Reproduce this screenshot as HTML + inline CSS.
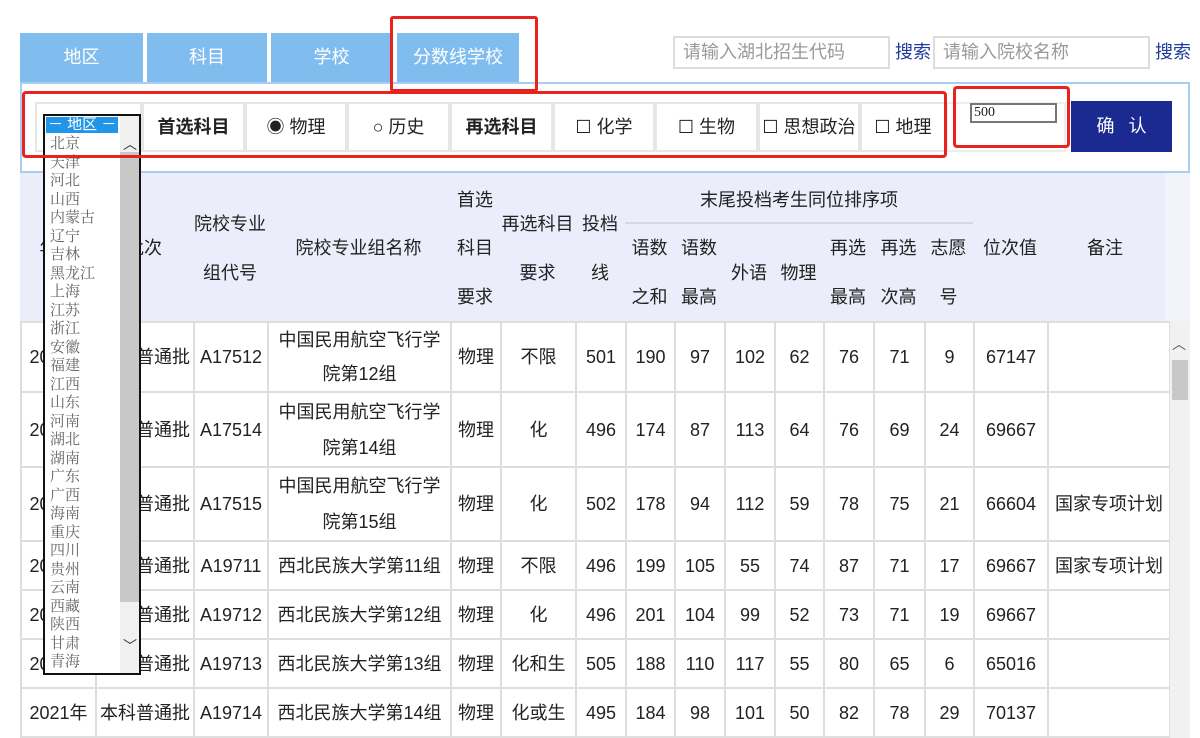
<!DOCTYPE html>
<html><head><meta charset="utf-8"><style>
*{margin:0;padding:0;box-sizing:border-box}
body{width:1200px;height:738px;background:#fff;position:relative;overflow:hidden;font-family:"Liberation Sans","Noto Sans CJK SC",sans-serif;color:#222}
.a{position:absolute}
.tab{position:absolute;top:33px;height:49px;background:#80bdee;color:#fff;font-size:18px;text-align:center;line-height:49px}
.cell{position:absolute;top:102px;height:50px;border:2px solid #e6e6e6;font-size:18px;line-height:46px;text-align:center;background:#fff}
.h{position:absolute;font-size:18px;line-height:20px;text-align:center;color:#222}
table{position:absolute;left:20px;top:321px;border-collapse:collapse;table-layout:fixed;width:1149px}
td{border:2px solid #dedede;font-size:18px;text-align:center;line-height:36px;padding:0;white-space:nowrap;overflow:hidden}
.lst{position:absolute;left:43px;top:114px;width:98px;height:561px;border:2px solid #111;background:#fff;overflow:hidden}
.lst .it{font-family:"Noto Serif CJK SC","Liberation Serif",serif;font-size:15px;line-height:18.5px;height:18.5px;color:#666;padding-left:5px;overflow:hidden}
</style></head><body>
<div class="tab" style="left:20px;width:123px">地区</div>
<div class="tab" style="left:147px;width:120px">科目</div>
<div class="tab" style="left:271px;width:121px">学校</div>
<div class="tab" style="left:397px;width:122px">分数线学校</div>
<div class="a" style="left:673px;top:36px;width:217px;height:33px;border:2px solid #ddd;color:#999;font-size:18px;line-height:29px;padding-left:8px">请输入湖北招生代码</div>
<div class="a" style="left:895px;top:38px;color:#1e3a9a;font-size:18px">搜索</div>
<div class="a" style="left:933px;top:36px;width:217px;height:33px;border:2px solid #ddd;color:#999;font-size:18px;line-height:29px;padding-left:8px">请输入院校名称</div>
<div class="a" style="left:1155px;top:38px;color:#1e3a9a;font-size:18px">搜索</div>
<div class="a" style="left:20px;top:82px;width:1170px;height:91px;border:2px solid #a8cdee"></div>
<div class="cell" style="left:35px;width:107px"></div>
<div class="cell" style="left:142px;width:103px;font-weight:bold">首选科目</div>
<div class="cell" style="left:245px;width:102px">◉ 物理</div>
<div class="cell" style="left:347px;width:103px">○ 历史</div>
<div class="cell" style="left:450px;width:103px;font-weight:bold">再选科目</div>
<div class="cell" style="left:553px;width:102px">☐ 化学</div>
<div class="cell" style="left:655px;width:103px">☐ 生物</div>
<div class="cell" style="left:758px;width:102px">☐ 思想政治</div>
<div class="cell" style="left:860px;width:86px">☐ 地理</div>
<div class="cell" style="left:946px;width:120px;border-color:#eee"></div>
<div class="a" style="left:970px;top:103px;width:87px;height:20px;border:2px solid #777;font-family:'Liberation Serif',serif;font-size:14px;line-height:16px;padding-left:2px;background:#fff">500</div>
<div class="a" style="left:1071px;top:101px;width:101px;height:51px;background:#1b2a90;color:#fff;font-size:18px;line-height:51px;text-align:center;letter-spacing:14px;padding-left:14px">确认</div>
<div class="a" style="left:20px;top:173px;width:1145px;height:148px;background:#ebedfb"></div>
<div class="a" style="left:1165px;top:173px;width:25px;height:148px;background:#f3f3fb"></div>
<div class="h" style="left:20px;top:238px;width:75px">年份</div>
<div class="h" style="left:95px;top:238px;width:98px">批次</div>
<div class="h" style="left:193px;top:214px;width:74px">院校专业</div>
<div class="h" style="left:193px;top:263px;width:74px">组代号</div>
<div class="h" style="left:267px;top:238px;width:183px">院校专业组名称</div>
<div class="h" style="left:450px;top:190px;width:50px">首选</div>
<div class="h" style="left:450px;top:238px;width:50px">科目</div>
<div class="h" style="left:450px;top:287px;width:50px">要求</div>
<div class="h" style="left:498px;top:214px;width:79px">再选科目</div>
<div class="h" style="left:500px;top:263px;width:75px">要求</div>
<div class="h" style="left:575px;top:214px;width:50px">投档</div>
<div class="h" style="left:575px;top:263px;width:50px">线</div>
<div class="h" style="left:625px;top:190px;width:348px">末尾投档考生同位排序项</div>
<div class="a" style="left:625px;top:222px;width:348px;height:2px;background:#d8d8e0"></div>
<div class="h" style="left:625px;top:238px;width:49px">语数</div><div class="h" style="left:625px;top:287px;width:49px">之和</div>
<div class="h" style="left:674px;top:238px;width:50px">语数</div><div class="h" style="left:674px;top:287px;width:50px">最高</div>
<div class="h" style="left:724px;top:263px;width:50px">外语</div>
<div class="h" style="left:774px;top:263px;width:49px">物理</div>
<div class="h" style="left:823px;top:238px;width:50px">再选</div><div class="h" style="left:823px;top:287px;width:50px">最高</div>
<div class="h" style="left:873px;top:238px;width:51px">再选</div><div class="h" style="left:873px;top:287px;width:51px">次高</div>
<div class="h" style="left:924px;top:238px;width:49px">志愿</div><div class="h" style="left:924px;top:287px;width:49px">号</div>
<div class="h" style="left:973px;top:238px;width:74px">位次值</div>
<div class="h" style="left:1047px;top:238px;width:116px">备注</div>
<table>
<colgroup><col style="width:75px"><col style="width:98px"><col style="width:74px"><col style="width:183px"><col style="width:50px"><col style="width:75px"><col style="width:50px"><col style="width:49px"><col style="width:50px"><col style="width:50px"><col style="width:49px"><col style="width:50px"><col style="width:51px"><col style="width:49px"><col style="width:74px"><col style="width:122px"></colgroup>
<tr style="height:69px"><td>2021年</td><td>本科普通批</td><td>A17512</td><td style="white-space:normal;line-height:34px">中国民用航空飞行学<br>院第12组</td><td>物理</td><td>不限</td><td>501</td><td>190</td><td>97</td><td>102</td><td>62</td><td>76</td><td>71</td><td>9</td><td>67147</td><td></td></tr>
<tr style="height:75px"><td>2021年</td><td>本科普通批</td><td>A17514</td><td style="white-space:normal">中国民用航空飞行学<br>院第14组</td><td>物理</td><td>化</td><td>496</td><td>174</td><td>87</td><td>113</td><td>64</td><td>76</td><td>69</td><td>24</td><td>69667</td><td></td></tr>
<tr style="height:74px"><td>2021年</td><td>本科普通批</td><td>A17515</td><td style="white-space:normal">中国民用航空飞行学<br>院第15组</td><td>物理</td><td>化</td><td>502</td><td>178</td><td>94</td><td>112</td><td>59</td><td>78</td><td>75</td><td>21</td><td>66604</td><td>国家专项计划</td></tr>
<tr style="height:49px"><td>2021年</td><td>本科普通批</td><td>A19711</td><td>西北民族大学第11组</td><td>物理</td><td>不限</td><td>496</td><td>199</td><td>105</td><td>55</td><td>74</td><td>87</td><td>71</td><td>17</td><td>69667</td><td>国家专项计划</td></tr>
<tr style="height:49px"><td>2021年</td><td>本科普通批</td><td>A19712</td><td>西北民族大学第12组</td><td>物理</td><td>化</td><td>496</td><td>201</td><td>104</td><td>99</td><td>52</td><td>73</td><td>71</td><td>19</td><td>69667</td><td></td></tr>
<tr style="height:49px"><td>2021年</td><td>本科普通批</td><td>A19713</td><td>西北民族大学第13组</td><td>物理</td><td>化和生</td><td>505</td><td>188</td><td>110</td><td>117</td><td>55</td><td>80</td><td>65</td><td>6</td><td>65016</td><td></td></tr>
<tr style="height:49px"><td>2021年</td><td>本科普通批</td><td>A19714</td><td>西北民族大学第14组</td><td>物理</td><td>化或生</td><td>495</td><td>184</td><td>98</td><td>101</td><td>50</td><td>82</td><td>78</td><td>29</td><td>70137</td><td></td></tr>
</table>
<div class="a" style="left:1170px;top:321px;width:20px;height:417px;background:#f1f1f1"></div>
<div class="a" style="left:1172px;top:360px;width:16px;height:40px;background:#c8c8c8"></div>
<div class="a" style="left:1172px;top:334px;font-size:14px;color:#555">︿</div>
<div class="lst">
<div style="position:absolute;left:75px;top:0;width:21px;height:561px;background:#f0f0f0"></div>
<div style="position:absolute;left:75px;top:36px;width:21px;height:450px;background:#c8c8c8"></div>
<div style="position:absolute;left:78px;top:18px;font-size:14px;color:#333;font-family:'Liberation Sans',sans-serif">︿</div>
<div style="position:absolute;left:78px;top:520px;font-size:14px;color:#333;font-family:'Liberation Sans',sans-serif">﹀</div>
<div style="background:#2196e8;color:#fff;width:72px;margin:1px 0 0 1px;line-height:16px;height:16px;padding-left:2px;font-size:15px">－ 地区 －</div>
<div class="it" style="margin-top:1px">北京</div><div class="it">天津</div><div class="it">河北</div><div class="it">山西</div><div class="it">内蒙古</div><div class="it">辽宁</div><div class="it">吉林</div><div class="it">黑龙江</div><div class="it">上海</div><div class="it">江苏</div><div class="it">浙江</div><div class="it">安徽</div><div class="it">福建</div><div class="it">江西</div><div class="it">山东</div><div class="it">河南</div><div class="it">湖北</div><div class="it">湖南</div><div class="it">广东</div><div class="it">广西</div><div class="it">海南</div><div class="it">重庆</div><div class="it">四川</div><div class="it">贵州</div><div class="it">云南</div><div class="it">西藏</div><div class="it">陕西</div><div class="it">甘肃</div><div class="it">青海</div>
</div>
<div class="a" style="left:390px;top:16px;width:148px;height:76px;border:3px solid #e8231e;border-radius:3px"></div>
<div class="a" style="left:22px;top:91px;width:925px;height:67px;border:3px solid #e8231e;border-radius:4px"></div>
<div class="a" style="left:953px;top:86px;width:117px;height:62px;border:3px solid #e8231e;border-radius:4px"></div>
</body></html>
